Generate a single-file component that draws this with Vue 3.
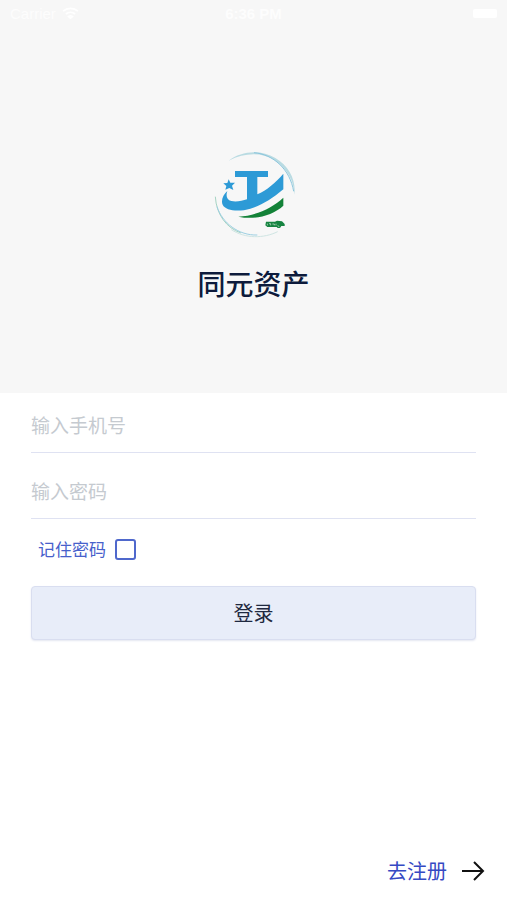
<!-- Login.vue -->
<template>
    <div class="login-page">
        <header class="hero">
            <div class="status-bar">
                <div class="carrier">
                    <span>Carrier</span>
                    <svg class="wifi" viewBox="0 0 18 13" aria-hidden="true">
                        <path d="M1 4.5a12 12 0 0 1 16 0M4 7.5a8 8 0 0 1 10 0" />
                        <path d="M7 10.3a3.5 3.5 0 0 1 4 0L9 12z" />
                    </svg>
                </div>
                <span class="time">6:36 PM</span>
                <div class="power"><i class="battery"></i></div>
            </div>

            <div class="brand">
                <svg class="logo" viewBox="0 0 300 312" aria-hidden="true">
                    <path fill="#b9dbe2" d="M74 56C112 27 170 22 214 48C256 73 277 116 271 158C271 117 250 80 210 53C170 30 122 32 74 56Z" />
                    <path fill="none" stroke="#8cc6de" stroke-width="3" d="M150 32C208 37 258 82 269 148" />
                    <path fill="none" stroke="#a5d3c3" stroke-width="3" d="M34 164C37 217 67 258 111 273" />
                    <path fill="none" stroke="#9dcfe2" stroke-width="3" d="M39 194C55 243 104 281 160 279" />
                    <path fill="none" stroke="#cfe5e3" stroke-width="3" d="M82 263C124 290 178 290 221 269" />
                    <path fill="#2d9ad6" d="M93 87H192V105H160V157C188 145 216 121 238 95V142C204 171 173 190 139 200C105 210 65 207 56 188C50 175 58 157 70 147C65 161 68 173 82 177C97 181 115 176 129 172V105H93Z" />
                    <path fill="#2d9ad6" d="M74 112L79 122L93 122L84 131L88 144L76 138L64 143L67 132L58 124L70 123Z" />
                    <path fill="#138238" d="M238 167V191C206 220 155 235 103 224C158 221 203 198 238 167Z" />
                    <path fill="#168441" d="M186 239H213L219 236L234 238L242 246V252H232L228 258H221L218 255H190L184 250Z" />
                    <path fill="none" stroke="#dceddf" stroke-width="2" d="M190 245V250M195 245H200V250M205 246H211V250M216 245V250M221 251L226 254" />
                </svg>
                <h1>{{ appName }}</h1>
            </div>
        </header>

        <form class="login-form" @submit.prevent>
            <input v-model="phone" class="field" type="tel" placeholder="输入手机号" aria-label="手机号">
            <input v-model="password" class="field" type="password" placeholder="输入密码" aria-label="密码">

            <label class="remember" for="remember">
                <span>记住密码</span>
                <input id="remember" v-model="remember" type="checkbox">
            </label>

            <button class="submit" type="submit">登录</button>
        </form>

        <footer class="footer">
            <a href="#register" class="register">
                <span>去注册</span>
                <svg class="arrow" viewBox="0 0 24 22" aria-hidden="true">
                    <path d="M1 11H22M13 2L22 11L13 20" />
                </svg>
            </a>
        </footer>
    </div>
</template>

<script setup>
import { ref } from 'vue'

const appName = '同元资产'
const phone = ref('')
const password = ref('')
const remember = ref(false)
</script>

<style>
body {
    margin: 0;
    background: #fff;
}
</style>

<style scoped>
.login-page {
    display: flex;
    flex-direction: column;
    min-height: 100vh;
    font-family: "Noto Sans CJK SC", sans-serif;
    background: #fff;
}

.hero {
    padding-bottom: 89px;
    background: #f7f7f7;
}

.status-bar {
    display: grid;
    grid-template-columns: 1fr auto 1fr;
    align-items: center;
    height: 26px;
    padding: 0 10px;
    color: #fdfdfd;
    font-family: "Liberation Sans", sans-serif;
    font-size: 15px;
}

.carrier {
    display: flex;
    align-items: center;
    gap: 6px;
}

.wifi {
    width: 17px;
    height: 12px;
    fill: none;
    stroke: #fff;
    stroke-width: 2;
}

.time {
    font-weight: bold;
}

.power {
    display: flex;
    justify-content: flex-end;
}

.battery {
    width: 24px;
    height: 9px;
    border-radius: 2px;
    background: #fff;
}

.brand {
    display: flex;
    flex-direction: column;
    align-items: center;
    padding-top: 116px;
}

.logo {
    width: 100px;
    height: 104px;
}

h1 {
    margin: 16px 0 0;
    color: #0d1b3c;
    font-size: 28px;
    font-weight: 500;
    line-height: 42px;
}

.login-form {
    display: flex;
    flex-direction: column;
    padding: 0 31px;
}

.field {
    box-sizing: border-box;
    width: 100%;
    height: 66px;
    padding: 10px 0 0;
    border: 0;
    border-bottom: 1px solid #dfe2f2;
    border-radius: 0;
    outline: none;
    background: transparent;
    color: #0d1b3c;
    font-family: inherit;
    font-size: 19px;
}

.field:first-child {
    height: 60px;
    padding-top: 4px;
}

.field::placeholder {
    color: #c5cad0;
    opacity: 1;
}

.remember {
    display: flex;
    align-items: center;
    align-self: flex-start;
    gap: 9px;
    height: 60px;
    padding-left: 7px;
    color: #4760cb;
    font-size: 17px;
}

.remember span {
    padding-bottom: 2px;
}

.remember input {
    appearance: none;
    box-sizing: border-box;
    width: 21px;
    height: 21px;
    margin: 0;
    border: 2px solid #4f68cc;
    border-radius: 3px;
    background: #fff;
}

.remember input:checked {
    background: #4f68cc;
}

.submit {
    height: 54px;
    margin-top: 7px;
    padding: 0 0 2px;
    border: 1px solid #d9def0;
    border-radius: 4px;
    background: #e8edf9;
    box-shadow: 0 1px 2px #e4e7f1;
    color: #1f2940;
    font-family: inherit;
    font-size: 20px;
    cursor: pointer;
}

.footer {
    display: flex;
    justify-content: flex-end;
    margin-top: auto;
    padding: 0 22px 14px 0;
}

.register {
    display: flex;
    align-items: center;
    gap: 14px;
    color: #3549c3;
    font-size: 20px;
    line-height: 30px;
    text-decoration: none;
}

.arrow {
    width: 24px;
    height: 22px;
    fill: none;
    stroke: #111;
    stroke-width: 2;
}
</style>
